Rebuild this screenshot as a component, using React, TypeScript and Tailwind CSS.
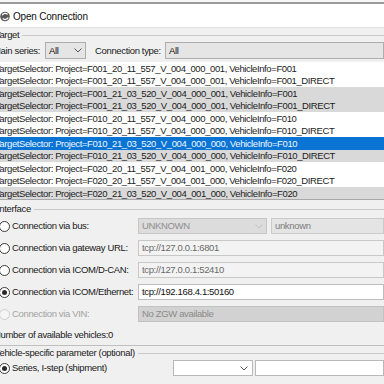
import React from "react";

type Row = { project: string; info: string; tone: "white" | "gray" | "selected" };

const rows: Row[] = [
  { project: "F001_20_11_557_V_004_000_001", info: "F001", tone: "white" },
  { project: "F001_20_11_557_V_004_000_001", info: "F001_DIRECT", tone: "white" },
  { project: "F001_21_03_520_V_004_000_001", info: "F001", tone: "gray" },
  { project: "F001_21_03_520_V_004_000_001", info: "F001_DIRECT", tone: "gray" },
  { project: "F010_20_11_557_V_004_000_000", info: "F010", tone: "white" },
  { project: "F010_20_11_557_V_004_000_000", info: "F010_DIRECT", tone: "white" },
  { project: "F010_21_03_520_V_004_000_000", info: "F010", tone: "selected" },
  { project: "F010_21_03_520_V_004_000_000", info: "F010_DIRECT", tone: "gray" },
  { project: "F020_20_11_557_V_004_001_000", info: "F020", tone: "white" },
  { project: "F020_20_11_557_V_004_001_000", info: "F020_DIRECT", tone: "white" },
  { project: "F020_21_03_520_V_004_001_000", info: "F020", tone: "gray" },
];

function Chevron({ color = "#555" }: { color?: string }) {
  return (
    <svg width="8" height="5" viewBox="0 0 8 5" className="shrink-0">
      <polyline points="0.5,0.5 4,4 7.5,0.5" fill="none" stroke={color} strokeWidth="1" />
    </svg>
  );
}

function Radio({ checked, disabled }: { checked?: boolean; disabled?: boolean }) {
  return (
    <span
      className={`w-[11px] h-[11px] rounded-full border flex items-center justify-center shrink-0 ${
        disabled ? "border-[#cfcfcf] bg-[#f4f4f4]" : "border-[#3a3a3a] bg-white"
      }`}
    >
      {checked && <span className="w-[5px] h-[5px] rounded-full bg-[#2a2a2a]" />}
    </span>
  );
}

function GroupHeader({ label, pad }: { label: string; pad: string }) {
  return (
    <div className={`h-[14px] flex items-center ${pad}`}>
      <span className="text-[#1a1a1a] whitespace-nowrap">{label}</span>
      <span className="flex-1 h-px bg-[#c9c9c9] ml-[3px]" />
    </div>
  );
}

function InterfaceRow({
  label,
  checked,
  disabled,
  children,
}: {
  label: string;
  checked?: boolean;
  disabled?: boolean;
  children: React.ReactNode;
}) {
  return (
    <div className="h-[16px] flex items-center">
      <div className="w-[145px] flex items-center pl-[6px] shrink-0">
        <Radio checked={checked} disabled={disabled} />
        <span className={`ml-[2px] whitespace-nowrap ${disabled ? "text-[#a3a3a3]" : "text-[#1a1a1a]"}`}>
          {label}
        </span>
      </div>
      <div className="flex-1 flex h-full gap-[4px]">{children}</div>
    </div>
  );
}

export default function App() {
  return (
    <div className="w-[384px] h-[384px] overflow-hidden bg-[#f0f0f0] font-['Liberation_Sans',Arial,sans-serif] text-[9.5px] tracking-[-0.35px] leading-none">
      <div className="h-[4px] bg-[#f7f7f7] border-b-2 border-[#9a9a9a]" />
      <div className="h-[24px] bg-white flex items-center pt-[2px] border-b border-[#e2e2e2]">
        <svg width="11" height="11" viewBox="0 0 11 11" className="shrink-0">
          <circle cx="5" cy="5.5" r="4.8" fill="#5a5a5a" />
          <path d="M2.2 4.2 C3 2.2 6 1.6 7.6 3.4" fill="none" stroke="#fff" strokeWidth="1.3" />
          <path d="M8.2 6.6 C7.4 8.6 4.4 9.2 2.8 7.4" fill="none" stroke="#fff" strokeWidth="1.3" />
        </svg>
        <span className="ml-[2px] text-[10px] tracking-[-0.2px] text-[#111]">Open Connection</span>
      </div>

      <div className="ml-[-7px] w-[391px]">
        <GroupHeader label="Target" pad="pl-[2px]" />

        <div className="h-[17px] flex items-center">
          <span className="w-[52px] text-[#1a1a1a] whitespace-nowrap">Main series:</span>
          <div className="w-[41px] h-full bg-[#e5e5e5] border border-[#adadad] flex items-center justify-between px-[3px]">
            <span className="text-[#111]">All</span>
            <Chevron />
          </div>
          <span className="ml-[9px] w-[70px] text-[#1a1a1a] whitespace-nowrap">Connection type:</span>
          <div className="flex-1 h-full bg-[#e5e5e5] border border-[#adadad] flex items-center px-[3px]">
            <span className="text-[#111]">All</span>
          </div>
        </div>

        <div className="mt-[3px] h-[138px] bg-white border-b border-[#a8a8a8] overflow-hidden tracking-[-0.4px]">
          {rows.map((r, i) => (
            <div
              key={i}
              className={`h-[12.5px] flex items-center pl-[2px] whitespace-nowrap ${
                r.tone === "selected"
                  ? "bg-[#0a74d4] text-[#eef6ff]"
                  : r.tone === "gray"
                  ? "bg-[#d9d9d9] text-[#1c1c1c]"
                  : "bg-white text-[#1c1c1c]"
              }`}
            >
              TargetSelector: Project={r.project}, VehicleInfo={r.info}
            </div>
          ))}
        </div>

        <div className="mt-[2px]">
          <GroupHeader label="Interface" pad="pl-[4px]" />
        </div>

        <div className="mt-[2px] flex flex-col gap-[6px]">
          <InterfaceRow label="Connection via bus:">
            <div className="w-[129px] bg-[#dcdcdc] border border-[#c6c6c6] flex items-center justify-between px-[3px]">
              <span className="text-[#8e8e8e]">UNKNOWN</span>
              <Chevron color="#c4c4c4" />
            </div>
            <div className="flex-1 bg-[#e4e4e4] border border-[#cacaca] flex items-center px-[3px]">
              <span className="text-[#7c7c7c]">unknown</span>
            </div>
          </InterfaceRow>
          <InterfaceRow label="Connection via gateway URL:">
            <div className="flex-1 bg-[#f3f3f3] border border-[#c8c8c8] flex items-center px-[3px]">
              <span className="text-[#6a6a6a]">tcp://127.0.0.1:6801</span>
            </div>
          </InterfaceRow>
          <InterfaceRow label="Connection via ICOM/D-CAN:">
            <div className="flex-1 bg-[#f3f3f3] border border-[#c8c8c8] flex items-center px-[3px]">
              <span className="text-[#6a6a6a]">tcp://127.0.0.1:52410</span>
            </div>
          </InterfaceRow>
          <InterfaceRow label="Connection via ICOM/Ethernet:" checked>
            <div className="flex-1 bg-white border border-[#bdbdbd] flex items-center px-[3px]">
              <span className="text-[#111]">tcp://192.168.4.1:50160</span>
            </div>
          </InterfaceRow>
          <InterfaceRow label="Connection via VIN:" disabled>
            <div className="flex-1 bg-[#d2d2d2] border border-[#c2c2c2] flex items-center px-[3px]">
              <span className="text-[#8a8a8a]">No ZGW available</span>
            </div>
          </InterfaceRow>
        </div>

        <div className="mt-[6px] h-[14px] flex items-center pl-[1px] text-[#1a1a1a] whitespace-nowrap">
          Number of available vehicles:0
        </div>
        <div className="mt-[3px] h-px bg-[#bfbfbf]" />

        <GroupHeader label="Vehicle-specific parameter (optional)" pad="pl-[1px]" />

        <div className="h-[16px] flex items-center">
          <div className="w-[180px] flex items-center pl-[6px] shrink-0">
            <Radio checked />
            <span className="ml-[2px] text-[#1a1a1a] whitespace-nowrap">Series, I-step (shipment)</span>
          </div>
          <div className="w-[80px] h-full bg-white border border-[#b8b8b8] flex items-center justify-end px-[4px]">
            <Chevron />
          </div>
          <div className="ml-[2px] flex-1 h-full bg-white border border-[#b8b8b8]" />
        </div>
      </div>
    </div>
  );
}
